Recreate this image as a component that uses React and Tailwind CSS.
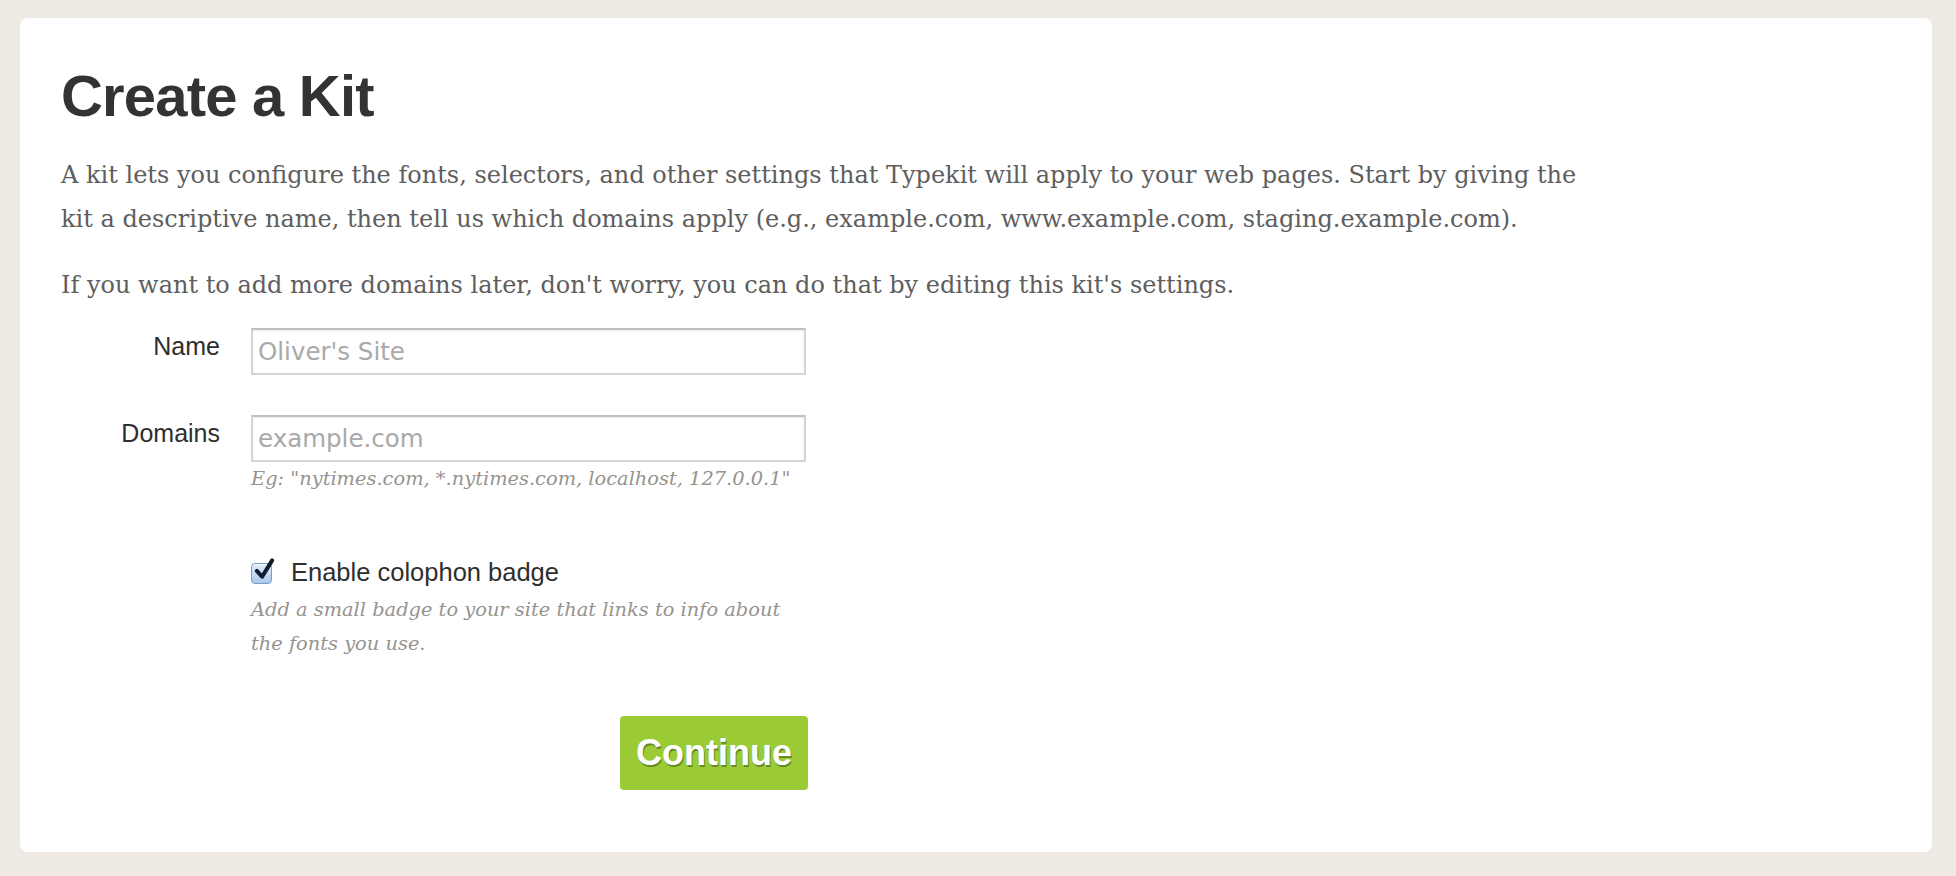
const sans = "font-['Liberation_Sans',Arial,Helvetica,sans-serif]";
const serif = "font-['DejaVu_Serif',Georgia,serif]";

function Field({ label, placeholder, hint }) {
  return (
    <div className="flex items-start">
      <label className={`w-[159px] shrink-0 pt-[6px] text-right text-[25px] leading-none text-[#2e2e2e] ${sans}`}>{label}</label>
      <div className="ml-[31px] w-[555px]">
        <input
          type="text"
          placeholder={placeholder}
          className="block h-[47px] w-full border-2 border-[#d4d4d4] border-t-[#bfbfbf] bg-white px-[5px] font-['DejaVu_Sans',sans-serif] text-[24.5px] text-[#333] shadow-[inset_0_1px_2px_rgba(0,0,0,0.08)] outline-none placeholder:text-[#a9a9a9]"
        />
        {hint ? <p className={`text-[19.4px] italic leading-[34px] text-[#96938e] ${serif}`}>{hint}</p> : null}
      </div>
    </div>
  );
}

function CheckMark() {
  return (
    <span className="relative block h-[21px] w-[21px] rounded-[4px] border border-[#7f9dc2] bg-gradient-to-b from-[#e4eefa] to-[#a9c8ea] shadow-[inset_0_1px_0_rgba(255,255,255,0.7)]">
      <svg viewBox="0 0 24 24" className="absolute -top-[8px] left-[1px] h-[27px] w-[23px]">
        <path d="M4 13.5 L9.5 19.5 L20 2.5" fill="none" stroke="#0e1c30" strokeWidth="4.2" strokeLinecap="round" strokeLinejoin="round" />
      </svg>
    </span>
  );
}

export default function App() {
  return (
    <div className="min-h-screen bg-[#eeeae3] pt-[18px] pr-[24px] pb-[24px] pl-[20px]">
      <div className="h-[834px] rounded-[8px] bg-white pt-[49px] pl-[41px]">
        <h1 className={`text-[58px] font-bold leading-none tracking-[-0.8px] text-[#333] ${sans}`}>Create a Kit</h1>
        <p className={`mt-[28px] max-w-[1535px] text-[24px] leading-[44px] text-[#5e5e5e] ${serif}`}>
          A kit lets you configure the fonts, selectors, and other settings that Typekit will apply to your web pages. Start by giving the kit a descriptive name, then tell us which domains apply (e.g., example.com, www.example.com, staging.example.com).
        </p>
        <p className={`mt-[22px] text-[24px] leading-[44px] text-[#5e5e5e] ${serif}`}>
          If you want to add more domains later, don't worry, you can do that by editing this kit's settings.
        </p>

        <form className="mt-[21px]" onSubmit={(e) => e.preventDefault()}>
          <Field label="Name" placeholder="Oliver's Site" />
          <div className="mt-[40px]">
            <Field label="Domains" placeholder="example.com" hint={'Eg: "nytimes.com, *.nytimes.com, localhost, 127.0.0.1"'} />
          </div>

          <div className="ml-[190px] w-[557px]">
            <label className="mt-[65px] flex h-[24px] items-center">
              <CheckMark />
              <span className={`ml-[19px] text-[25.5px] leading-none text-[#2e2e2e] ${sans}`}>Enable colophon badge</span>
            </label>
            <p className={`mt-[8px] w-[540px] text-[19.4px] italic leading-[34px] text-[#96938e] ${serif}`}>
              Add a small badge to your site that links to info about the fonts you use.
            </p>
            <div className="mt-[55px] flex justify-end">
              <button
                type="submit"
                className={`h-[74px] w-[188px] rounded-[4px] bg-[#9acb34] text-[36px] font-bold text-white [text-shadow:1px_2px_0_rgba(60,80,20,0.55)] ${sans}`}
              >
                Continue
              </button>
            </div>
          </div>
        </form>
      </div>
    </div>
  );
}
